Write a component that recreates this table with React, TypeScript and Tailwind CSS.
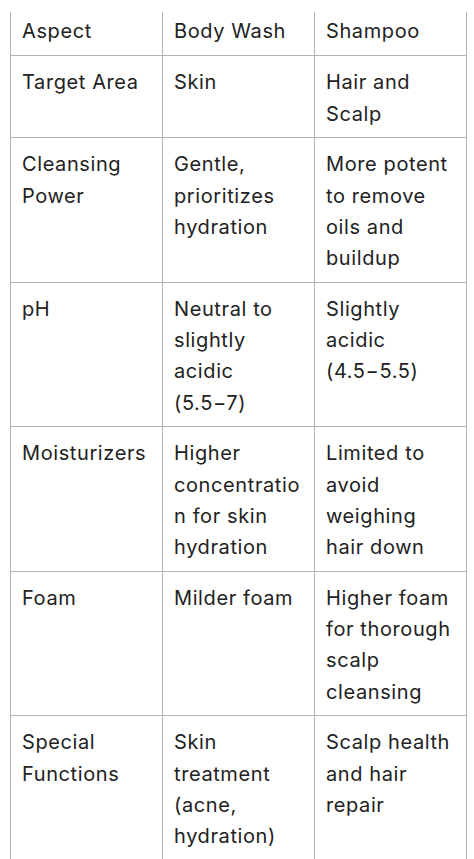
import React from "react";

const NB = ({ children }: { children: React.ReactNode }) => (
  <span className="whitespace-nowrap">{children}</span>
);

const rows: [string, React.ReactNode, React.ReactNode][] = [
  ["Target Area", "Skin", "Hair and Scalp"],
  ["Cleansing Power", "Gentle, prioritizes hydration", "More potent to remove oils and buildup"],
  [
    "pH",
    <>
      Neutral to slightly acidic <NB>(5.5−7)</NB>
    </>,
    <>
      Slightly acidic <NB>(4.5−5.5)</NB>
    </>,
  ],
  ["Moisturizers", "Higher concentration for skin hydration", "Limited to avoid weighing hair down"],
  ["Foam", "Milder foam", "Higher foam for thorough scalp cleansing"],
  ["Special Functions", "Skin treatment (acne, hydration)", "Scalp health and hair repair"],
];

export default function App() {
  return (
    <div
      className="w-[474px] h-[859px] overflow-hidden bg-white pt-[12px] pl-[10px] text-[#222222]"
      style={{ fontFamily: "Inter, 'Noto Sans', sans-serif" }}
    >
      <table className="table-fixed border-collapse w-[456px] text-[20px] leading-[31.25px] tracking-[0.6px]">
        <colgroup>
          <col className="w-[152px]" />
          <col className="w-[152px]" />
          <col className="w-[152px]" />
        </colgroup>
        <thead>
          <tr>
            {["Aspect", "Body Wash", "Shampoo"].map((h) => (
              <th
                key={h}
                className="border-x border-[#b3b3b3] text-left font-normal align-top pt-[4px] pb-[7.75px] px-[11px]"
              >
                {h}
              </th>
            ))}
          </tr>
        </thead>
        <tbody>
          {rows.map((r) => (
            <tr key={r[0]} className="border-t border-[#b3b3b3]">
              {r.map((c, i) => (
                <td
                  key={i}
                  className="border-x border-[#b3b3b3] align-top pt-[11.25px] pb-[7.25px] px-[11px] break-words"
                >
                  {c}
                </td>
              ))}
            </tr>
          ))}
        </tbody>
      </table>
    </div>
  );
}
